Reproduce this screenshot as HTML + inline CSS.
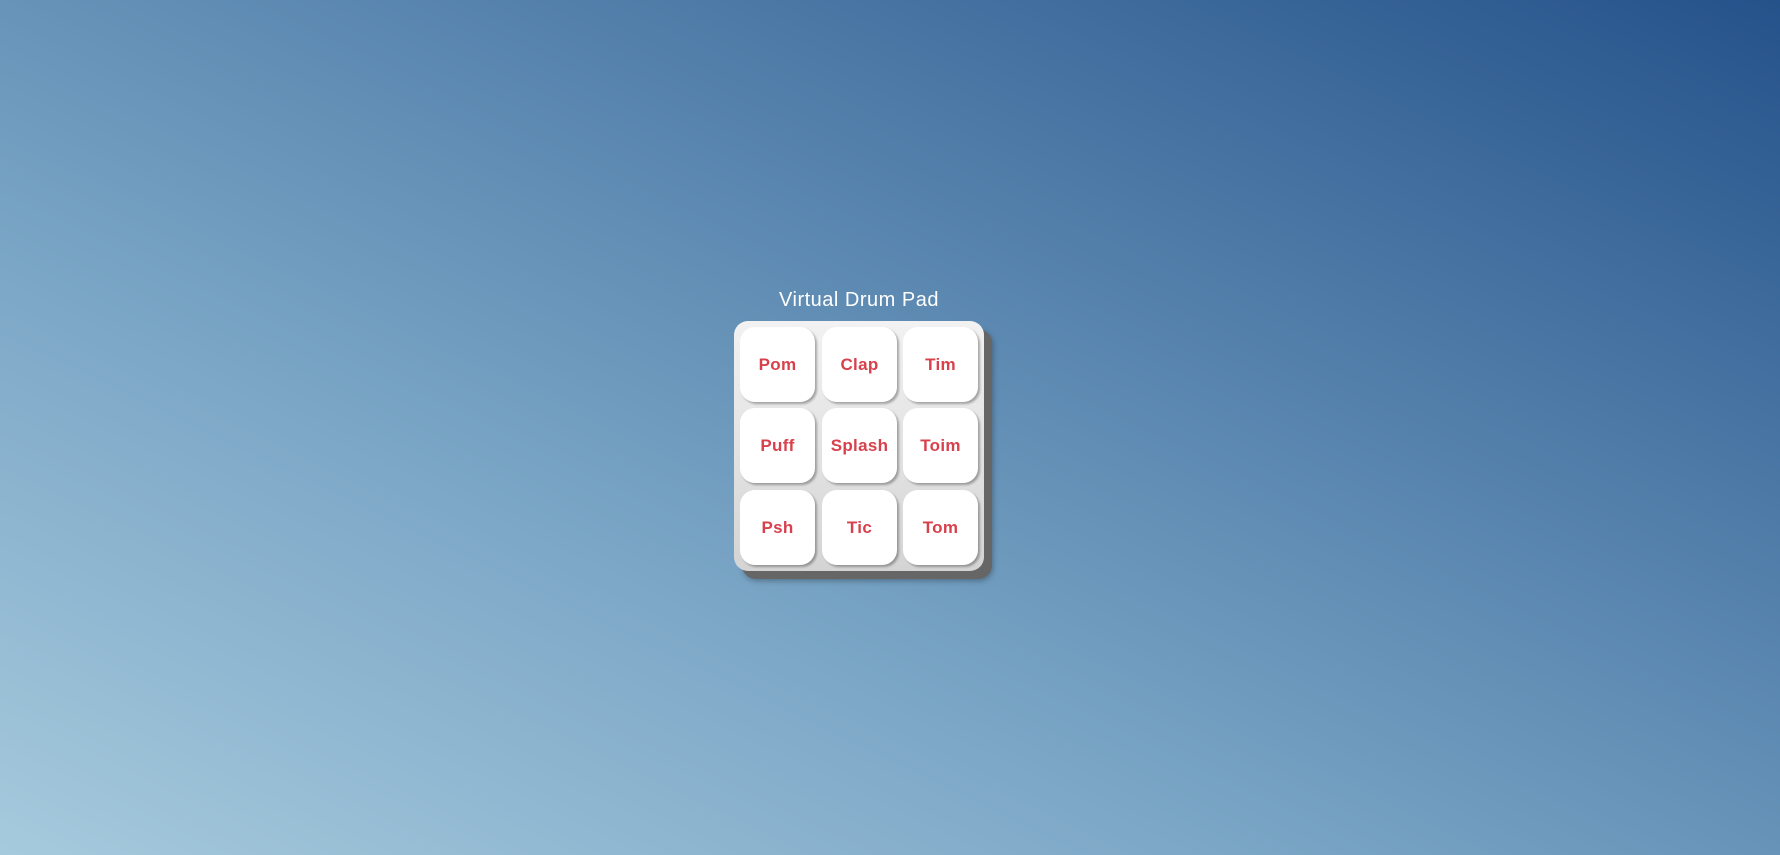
<!DOCTYPE html>
<html><head><meta charset="utf-8"><style>
html,body{margin:0;padding:0;width:1780px;height:855px;overflow:hidden;}
body{background:linear-gradient(to top right,#a6cadd 0%,#7ba6c6 35%,#5a87b0 60%,#25528a 100%);font-family:"Liberation Sans",sans-serif;position:relative;}
h1{position:absolute;left:0;width:1718px;top:289px;margin:0;text-align:center;color:#fff;font-weight:normal;font-size:20px;letter-spacing:0.5px;}
.board{position:absolute;left:734px;top:321px;width:250px;height:250px;border-radius:14px;background:linear-gradient(#f2f2f2,#d4d4d4);box-shadow:8px 8px 0 #666,9px 10px 6px rgba(0,0,0,.3);}
.pad{position:absolute;width:75px;height:75px;border-radius:15px;background:#fff;box-shadow:2px 2px 2px rgba(0,0,0,.3);color:#d8404c;font-size:17px;font-weight:bold;display:flex;align-items:center;justify-content:center;letter-spacing:0.3px;}
</style></head><body>
<h1>Virtual Drum Pad</h1>
<div class="board">
<div class="pad" style="left:6px;top:6px">Pom</div>
<div class="pad" style="left:88px;top:6px">Clap</div>
<div class="pad" style="left:169px;top:6px">Tim</div>
<div class="pad" style="left:6px;top:87px">Puff</div>
<div class="pad" style="left:88px;top:87px">Splash</div>
<div class="pad" style="left:169px;top:87px">Toim</div>
<div class="pad" style="left:6px;top:169px">Psh</div>
<div class="pad" style="left:88px;top:169px">Tic</div>
<div class="pad" style="left:169px;top:169px">Tom</div>
</div>
</body></html>
